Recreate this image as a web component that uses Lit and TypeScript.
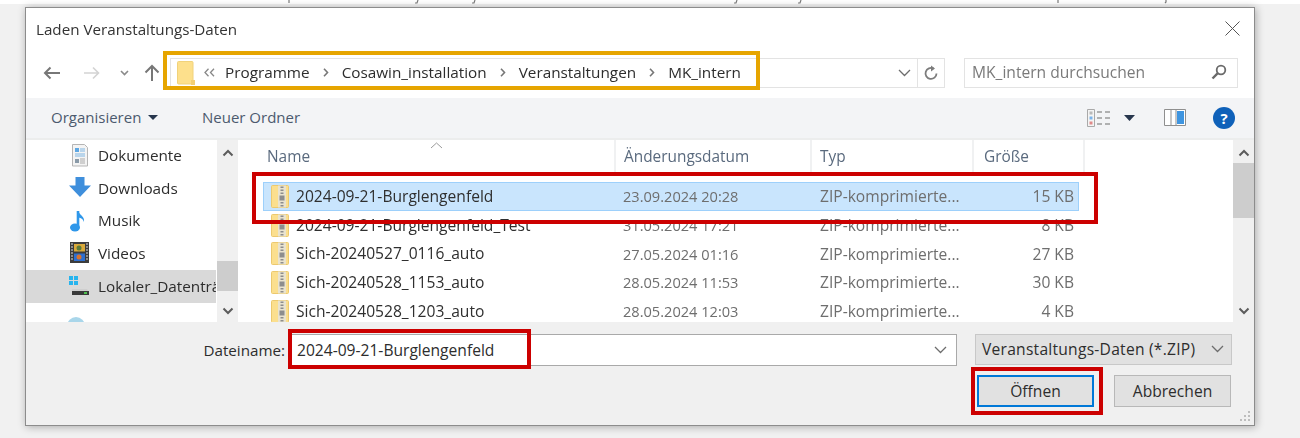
import { LitElement, html, css, svg } from "lit";
import { customElement } from "lit/decorators.js";

const zip = html`<svg class="zip" width="18" height="23" viewBox="0 0 18 23">
  <path d="M.5 1.500a1 1 0 0 1 1-1h15a1 1 0 0 1 1 1v20a1 1 0 0 1-1 1h-15a1 1 0 0 1-1-1z" fill="#fbdf8e" stroke="#ecc96f"/>
  <path d="M7 .5h8v22H7z" fill="#e9e3cf"/>
  <path d="M9.500 1.500h3v1.500h-3zM9.500 4.500h3V6h-3zM9.500 7.500h3V9h-3zM8.500 10.500h5v5h-5zM9.500 17h3v1.500h-3zM9.500 20h3v1.500h-3z" fill="#8d8d8d"/>
</svg>`;

const chevUp = html`<svg width="12" height="8" viewBox="0 0 12 8"><path d="M1.500 6.500L6 2l4.500 4.500" fill="none" stroke="#5c5c5c" stroke-width="2"/></svg>`;
const chevDown = html`<svg width="12" height="8" viewBox="0 0 12 8"><path d="M1.500 1.500L6 6l4.500-4.500" fill="none" stroke="#5c5c5c" stroke-width="2"/></svg>`;
const thinDown = html`<svg width="13" height="8" viewBox="0 0 13 8"><path d="M1 1l5.500 5.500L12 1" fill="none" stroke="#6d6d6d" stroke-width="1.300"/></svg>`;
const crumbSep = html`<svg class="sep" width="6" height="9" viewBox="0 0 6 9"><path d="M1 .8l3.500 3.700L1 8.200" fill="none" stroke="#777" stroke-width="1.600"/></svg>`;

const rows = [
  ["2024-09-21-Burglengenfeld", "23.09.2024 20:28", "15 KB", true],
  ["2024-09-21-Burglengenfeld_Test", "31.05.2024 17:21", "8 KB", false],
  ["Sich-20240527_0116_auto", "27.05.2024 01:16", "27 KB", false],
  ["Sich-20240528_1153_auto", "28.05.2024 11:53", "30 KB", false],
  ["Sich-20240528_1203_auto", "28.05.2024 12:03", "4 KB", false],
] as const;

const sideIcons = [
  svg`<path d="M3.500 .5h12l3 3v18.500h-15z" fill="#f4f4f4" stroke="#b5b5b5"/><path d="M6 4h4v4H6z" fill="#5da7e3"/><path d="M11 5h5M11 7h5M6 10h10M6 12h10" stroke="#7fb6e3"/><path d="M6 15h4v4H6z" fill="#8a9aa8"/><path d="M11 15h5M11 17h5M11 19h5" stroke="#aaa"/>`,
  svg`<path d="M6.500 0h9v8.500h6.500L11 20 0 8.500h6.500z" fill="#3f8fdc"/>`,
  svg`<path d="M9 1v15.500" stroke="#2e97ea" stroke-width="2.600"/><ellipse cx="6" cy="17.500" rx="5" ry="4" fill="#2e97ea"/><path d="M9.500 1c.5 4 6.500 5 5.500 11-1-3-3-4-5.500-4.500z" fill="#2e97ea"/>`,
  svg`<path d="M1 0h19v21H1z" fill="#3c3c3c"/><path d="M5 2h11v7.500H5z" fill="#d9a93a"/><path d="M5 11.500h11v7.500H5z" fill="#2e6fd0"/><circle cx="10" cy="6" r="2.500" fill="#5a7a3a"/><circle cx="10" cy="15" r="2.500" fill="#d9732e"/><path d="M2 2h2M2 5h2M2 8h2M2 11h2M2 14h2M2 17h2M17 2h2M17 5h2M17 8h2M17 11h2M17 14h2M17 17h2" stroke="#ddd"/>`,
  svg`<path d="M0 1h4v4H0zM5 1h4v4H5zM0 6h4v4H0zM5 6h4v4H5z" fill="#27b4ee"/><path d="M3 14h15l2 3H3z" fill="#cfcfcf"/><path d="M3 16h17v4H3z" fill="#3a3a3a"/><path d="M15 17h3v2h-3z" fill="#4fc04f"/>`,
];

@customElement("app-root")
export class AppRoot extends LitElement {
  static styles = css`
    :host {
      display: block;
      position: relative;
      width: 1300px;
      height: 438px;
      overflow: hidden;
      background: #f1f1f1;
      font-family: "Open Sans", "Noto Sans", sans-serif;
      font-size: 15.6px;
      color: #2d2d2d;
    }
    .page { filter: blur(0.4px); width: 1300px; height: 438px; }
    .strip { height: 4px; background: #fff; display: block; }
    .dialog {
      margin: 2.500px 0 0 25px;
      width: 1230px;
      height: 419px;
      box-sizing: border-box;
      border: 1px solid #8c8c8c;
      background: #fff;
      box-shadow: 1px 1px 8px rgba(0, 0, 0, 0.3);
      display: flex;
      flex-direction: column;
    }
    .title {
      height: 44px;
      flex: none;
      box-sizing: border-box;
      display: flex;
      align-items: center;
      justify-content: space-between;
      padding: 0 14px 2px 10px;
      font-size: 15.200px;
      color: #333;
    }
    .nav {
      height: 46px;
      flex: none;
      display: flex;
      align-items: flex-start;
      padding: 6px 16px 0 0;
      box-sizing: border-box;
    }
    .arrows {
      width: 144px;
      flex: none;
      height: 30px;
      display: flex;
      align-items: center;
      padding-left: 17px;
      box-sizing: border-box;
    }
    .arrows svg { flex: none; }
    .fwd { margin-left: 23px; }
    .dn { margin-left: 20px; }
    .up { margin-left: 15px; }
    .address {
      width: 775px;
      height: 30px;
      box-sizing: border-box;
      border: 1px solid #e3e3e3;
      display: flex;
      align-items: center;
      flex: none;
    }
    .crumbs { flex: 1; display: flex; align-items: center; min-width: 0; font-size: 15.300px; }
    .crumbs .c { margin: 0 13px; white-space: nowrap; padding-bottom: 1px; }
    .crumbs .c:first-of-type { margin-left: 10px; }
    .folder { margin-left: 6px; }
    .dbl { margin-left: 9px; }
    .addr-drop { width: 26px; display: flex; justify-content: center; }
    .refresh {
      width: 26px;
      height: 28px;
      border-left: 1px solid #e3e3e3;
      display: flex;
      align-items: center;
      justify-content: center;
    }
    .search {
      margin-left: 19px;
      width: 274px;
      height: 30px;
      box-sizing: border-box;
      border: 1px solid #e3e3e3;
      display: flex;
      align-items: center;
      justify-content: space-between;
      padding: 0 10px 2px 7px;
      color: #7a7a7a;
    }
    .toolbar {
      height: 40px;
      flex: none;
      background: #f3f4f6;
      display: flex;
      align-items: center;
      padding: 0 19px 0 25px;
      color: #4c5a6e;
      font-size: 15px;
      border-bottom: 2px solid #eceded;
    }
    .toolbar .org { display: flex; align-items: center; gap: 7px; width: 151px; }
    .toolbar .spacer { flex: 1; }
    .tools { display: flex; align-items: center; }
    .lift { padding-bottom: 2px; }
    .t-caret { margin-left: 13px; }
    .t-pane { margin-left: 29px; }
    .t-help { margin-left: 27px; }
    .body { height: 182px; flex: none; display: flex; overflow: hidden; }
    .side { width: 190px; margin-right: 1px; flex: none; overflow: hidden; font-size: 15.300px; }
    .side-item {
      height: 32.700px;
      display: flex;
      align-items: center;
      padding-left: 43px;
      box-sizing: border-box;
      white-space: nowrap;
      overflow: hidden;
    }
    .side-item.sel { background: #d9d9d9; }
    .side-ic { width: 29px; flex: none; display: flex; }
    .side-text { padding-bottom: 2px; }
    .side-next { margin: 13px 0 0 40px; display: block; }
    .sb {
      flex: none;
      width: 21px;
      background: #f0f0f0;
      position: relative;
      display: flex;
      flex-direction: column;
      justify-content: space-between;
      align-items: center;
      padding: 9px 0 7px;
      box-sizing: border-box;
    }
    .thumb { position: absolute; left: 0; right: 0; background: #cdcdcd; }
    .thumb.a { top: 121px; height: 30px; }
    .thumb.b { top: 23px; height: 55px; }
    .list { flex: 1; min-width: 0; overflow: hidden; position: relative; }
    .head {
      height: 33px;
      display: grid;
      grid-template-columns: 378px 196px 162px 111px;
      color: #5a6a7e;
      font-size: 15.400px;
      position: relative;
    }
    .head > div { padding-left: 8px; display: flex; align-items: center; border-right: 2px solid #f0f1f2; box-sizing: border-box; height: 33px; }
    .head > div:first-child { padding-left: 29px; }
    .head > div:last-of-type { padding-left: 10px; }
    .sort { position: absolute; left: 192px; top: 2px; }
    .rows { margin: 9.500px 0 0 25px; width: 816px; }
    .row {
      height: 28.700px;
      display: grid;
      grid-template-columns: 360px 197px 162px 1fr;
      align-items: center;
      box-sizing: border-box;
      color: #6e6e6e;
      white-space: nowrap;
    }
    .row.sel { background: #c9e5fd; outline: 1px solid #9dd0fb; outline-offset: -1px; }
    .row .name { display: flex; align-items: center; gap: 7px; padding-left: 8px; color: #2f2f2f; }
    .row .name span { padding-bottom: 1px; }
    .row .date { font-size: 14.600px; }
    .zip { flex: none; }
    .row .size { text-align: right; padding-right: 5px; }
    .bottom {
      flex: 1;
      background: #f0f0f0;
      display: grid;
      grid-template-columns: 265px 666px 275px 1fr;
      grid-template-rows: 32px 32px;
      row-gap: 9px;
      padding-top: 12px;
      position: relative;
      align-content: start;
    }
    .fn-label { text-align: right; padding-right: 6px; line-height: 32px; font-size: 15.200px; }
    .fn {
      background: #fff;
      border: 1px solid #a9a9a9;
      box-sizing: border-box;
      display: flex;
      align-items: center;
      justify-content: space-between;
      padding: 0 9px 0 5px;
    }
    .filter {
      margin-left: 18px;
      background: #e1e1e1;
      border: 1px solid #c8c8c8;
      box-sizing: border-box;
      display: flex;
      align-items: center;
      justify-content: space-between;
      padding: 0 7px 0 6px;
      width: 257px;
      height: 31px;
      font-size: 15.600px;
      letter-spacing: 0.25px;
      white-space: nowrap;
    }
    .btns {
      grid-column: 1 / -1;
      display: flex;
      justify-content: flex-end;
      gap: 20px;
      padding-right: 23px;
    }
    .btn {
      width: 117px;
      height: 32px;
      box-sizing: border-box;
      border: 1px solid #b8b8b8;
      background: #e1e1e1;
      display: flex;
      align-items: center;
      justify-content: center;
    }
    .btn.def { border: 2px solid #0078d7; }
    .grip { position: absolute; right: 3px; bottom: 2px; }
    .marks { display: block; position: absolute; left: 0; top: 0; }
    .mark { position: absolute; box-sizing: border-box; border-style: solid; pointer-events: none; }
    .orange { left: 163px; top: 51px; width: 597px; height: 39px; border: 4px solid #e6a500; }
    .red1 { left: 252px; top: 172px; width: 846px; height: 52px; border: 4px solid #cc0000; }
    .red2 { left: 288px; top: 329px; width: 243px; height: 40px; border: 4px solid #cc0000; }
    .red3 { left: 971px; top: 367px; width: 132px; height: 48px; border: 4px solid #cc0000; }
  `;

  render() {
    return html`<div class="page">
      <div class="strip"></div>
      <svg class="marks" width="1300" height="5" viewBox="0 0 1300 5">
        <path d="M289 0v3M415 3h2l1-3M472 3h2l1-3M734 3h2l1-3M798 3h2l1-3M1058 0v3M1166 0v2l-1 1" fill="none" stroke="#777" stroke-width="1.200"/>
      </svg>
      <div class="dialog">
        <div class="title">
          <span>Laden Veranstaltungs-Daten</span>
          <svg width="15" height="15" viewBox="0 0 15 15"><path d="M.5.5l14 14M14.500.5l-14 14" stroke="#555" stroke-width="1"/></svg>
        </div>
        <div class="nav">
          <div class="arrows">
            <svg width="18" height="14" viewBox="0 0 18 14"><path d="M17 7H2M7.500 1.500L2 7l5.500 5.500" fill="none" stroke="#777" stroke-width="2"/></svg>
            <svg class="fwd" width="16" height="14" viewBox="0 0 16 14"><path d="M0 7h14M9 1.500L14.500 7 9 12.500" fill="none" stroke="#d3d3d3" stroke-width="1.600"/></svg>
            <svg class="dn" width="9" height="6" viewBox="0 0 9 6"><path d="M1 1l3.500 3.500L8 1" fill="none" stroke="#8a8a8a" stroke-width="1.600"/></svg>
            <svg class="up" width="16" height="17" viewBox="0 0 16 17"><path d="M8 17V2M1.500 8.500L8 2l6.500 6.500" fill="none" stroke="#777" stroke-width="2"/></svg>
          </div>
          <div class="address">
            <div class="crumbs">
              <svg class="folder" width="18" height="24" viewBox="0 0 18 24"><path d="M.5 1.500a1 1 0 0 1 1-1h13.500a1 1 0 0 1 1 1V23H1.500a1 1 0 0 1-1-1z" fill="#fde08c" stroke="#f1d27a"/><path d="M14 19h4v5h-4z" fill="#f3cf73"/></svg>
              <svg class="dbl" width="11" height="9" viewBox="0 0 11 9"><path d="M4.500 .8L1 4.500l3.500 3.700M10 .8L6.500 4.500 10 8.200" fill="none" stroke="#888" stroke-width="1.300"/></svg>
              <span class="c">Programme</span>${crumbSep}
              <span class="c">Cosawin_installation</span>${crumbSep}
              <span class="c">Veranstaltungen</span>${crumbSep}
              <span class="c">MK_intern</span>
            </div>
            <div class="addr-drop">${thinDown}</div>
            <div class="refresh">
              <svg width="15" height="16" viewBox="0 0 15 16"><path d="M12.500 8.500a5.500 5.500 0 1 1-3-5" fill="none" stroke="#7c7c7c" stroke-width="1.800"/><path d="M7 .5l4 3-4 3z" fill="#7c7c7c"/></svg>
            </div>
          </div>
          <div class="search">
            <span>MK_intern durchsuchen</span>
            <svg width="16" height="16" viewBox="0 0 16 16"><circle cx="10" cy="6" r="4.300" fill="none" stroke="#6a6a6a" stroke-width="1.800"/><path d="M6.800 9.200L1.500 14.500" stroke="#6a6a6a" stroke-width="2.400"/></svg>
          </div>
        </div>
        <div class="toolbar">
          <div class="org"><span class="lift">Organisieren</span>
            <svg width="10" height="5" viewBox="0 0 10 5"><path d="M0 0h10L5 5z" fill="#27364d"/></svg>
          </div>
          <span class="lift">Neuer Ordner</span>
          <div class="spacer"></div>
          <div class="tools">
            <svg width="24" height="18" viewBox="0 0 24 18">
              <path d="M.5.5h7v17h-7z" fill="#f4f4f4" stroke="#a9a9a9"/>
              <path d="M2.500 2.500h3v3h-3z" fill="#b9b9b9"/><path d="M2.500 7.500h3v3h-3z" fill="#7cb4ea"/><path d="M2.500 12.500h3v3h-3z" fill="#e08a8a"/>
              <path d="M10 3h5M18 3h5M10 9h5M18 9h5M10 15h5M18 15h5" stroke="#9a9a9a" stroke-width="1.500"/>
            </svg>
            <svg class="t-caret" width="11" height="6" viewBox="0 0 11 6"><path d="M0 0h11L5.500 6z" fill="#27364d"/></svg>
            <svg class="t-pane" width="22" height="17" viewBox="0 0 22 17"><path d="M.5.5h21v16H.500z" fill="#fff" stroke="#8f8f8f"/><path d="M13 2h7v13h-7z" fill="#3f95e0"/><path d="M7 1v15M12 1v15" stroke="#8f8f8f"/></svg>
            <svg class="t-help" width="22" height="22" viewBox="0 0 22 22"><circle cx="11" cy="11" r="11" fill="#0f61b9"/><text x="11" y="16.500" text-anchor="middle" fill="#fff" font-size="15" font-weight="700" font-family="Open Sans, sans-serif">?</text></svg>
          </div>
        </div>
        <div class="body">
          <div class="side">
            ${["Dokumente", "Downloads", "Musik", "Videos", "Lokaler_Datenträger"].map(
              (t, i) => html`<div class="side-item ${i === 4 ? "sel" : ""}">
                <span class="side-ic"><svg width="22" height="23" viewBox="0 0 22 23">${sideIcons[i]}</svg></span><span class="side-text">${t}</span>
              </div>`
            )}
            <svg class="side-next" width="20" height="20" viewBox="0 0 20 20"><circle cx="10" cy="10" r="9" fill="#a9d6ea"/></svg>
          </div>
          <div class="sb">
            ${chevUp}
            <div class="thumb a"></div>
            ${chevDown}
          </div>
          <div class="list">
            <div class="head">
              <div>Name</div><div>Änderungsdatum</div><div>Typ</div><div>Größe</div>
              <svg class="sort" width="13" height="7" viewBox="0 0 13 7"><path d="M1 6l5.500-5L12 6" fill="none" stroke="#9a9a9a" stroke-width="1"/></svg>
            </div>
            <div class="rows">
              ${rows.map(
                (r) => html`<div class="row ${r[3] ? "sel" : ""}">
                  <div class="name">${zip}<span>${r[0]}</span></div>
                  <div class="date">${r[1]}</div>
                  <div>ZIP-komprimierte...</div>
                  <div class="size">${r[2]}</div>
                </div>`
              )}
            </div>
          </div>
          <div class="sb">
            ${chevUp}
            <div class="thumb b"></div>
            ${chevDown}
          </div>
        </div>
        <div class="bottom">
          <div class="fn-label">Dateiname:</div>
          <div class="fn"><span>2024-09-21-Burglengenfeld</span>${thinDown}</div>
          <div class="filter"><span>Veranstaltungs-Daten (*.ZIP)</span>${thinDown}</div>
          <div class="btns">
            <div class="btn def">Öffnen</div>
            <div class="btn">Abbrechen</div>
          </div>
          <svg class="grip" width="12" height="12" viewBox="0 0 12 12"><path d="M9 0h2v2H9zM5 4h2v2H5zM9 4h2v2H9zM1 8h2v2H1zM5 8h2v2H5zM9 8h2v2H9z" fill="#bdbdbd"/></svg>
        </div>
      </div>
      <div class="mark orange"></div>
      <div class="mark red1"></div>
      <div class="mark red2"></div>
      <div class="mark red3"></div>
    </div>`;
  }
}
